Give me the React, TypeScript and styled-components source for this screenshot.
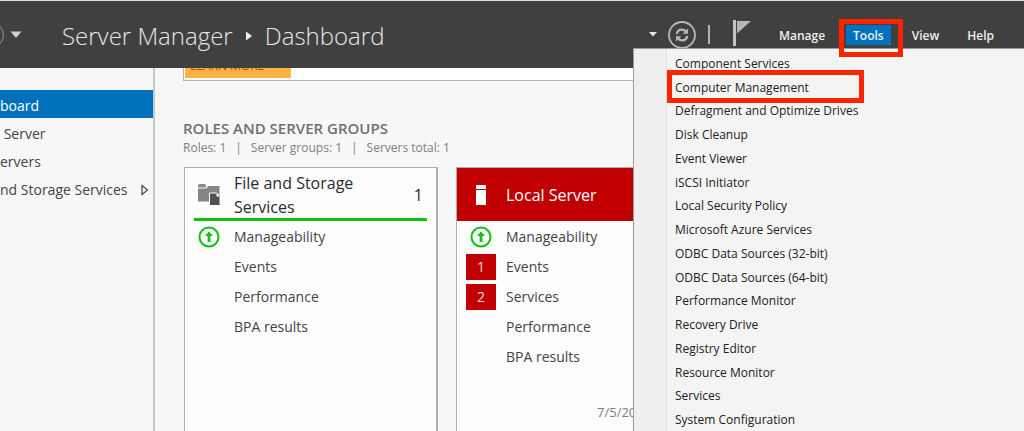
import React from 'react';
import styled, { createGlobalStyle, css } from 'styled-components';

const GlobalStyle = createGlobalStyle`
  *, *::before, *::after { box-sizing: border-box; }
  body {
    margin: 0;
    font-family: "Open Sans", "Noto Sans", sans-serif;
    font-size: 14px;
    color: #444;
    background: #f7f7f7;
  }
  button { font: inherit; color: inherit; border: 0; padding: 0; background: none; cursor: pointer; }
  a { color: inherit; text-decoration: none; }
  h1, h2, h3, p, ul { margin: 0; padding: 0; font-weight: 400; font-size: inherit; }
  ul { list-style: none; }
  svg { display: block; flex: none; }
`;

const Page = styled.div`
  position: relative;
  display: flex;
  flex-direction: column;
  height: 100vh;
  overflow: hidden;
`;

const Header = styled.header`
  display: flex;
  align-items: center;
  justify-content: space-between;
  flex: none;
  height: 68px;
  padding-right: 23px;
  color: #e6e6e6;
  background: #404040;
  border-top: 1px solid #d8dcda;
`;

const Breadcrumb = styled.div`
  display: flex;
  align-items: center;
  height: 100%;
`;

const History = styled.button`
  display: flex;
  width: 62px;
`;

const Title = styled.h1`
  display: flex;
  align-items: center;
  gap: 13px;
  padding-top: 2px;
  font-size: 24px;
  line-height: 32px;
  font-weight: 300;
  white-space: nowrap;
`;

const Actions = styled.div`
  display: flex;
  align-items: center;
`;

const IconButton = styled.button<{ $gap: number }>`
  display: flex;
  margin-right: ${p => p.$gap}px;
`;

const Divider = styled.span`
  width: 2px;
  height: 19px;
  margin-right: 23px;
  background: #b4b4b4;
`;

const MenuBar = styled.nav`
  display: flex;
  align-items: center;
  gap: 14px;
`;

const MenuButton = styled.button<{ $active?: boolean }>`
  position: relative;
  height: 20px;
  padding: 2px 7px 0;
  font-size: 12px;
  line-height: 18px;
  font-weight: 600;
  color: #f0f0f0;
  ${p => p.$active && css`background: #0072bd;`}
`;

const Highlight = styled.span<{ $inset: string }>`
  position: absolute;
  z-index: 3;
  inset: ${p => p.$inset};
  border: 5px solid #fc2500;
  pointer-events: none;
`;

const Body = styled.div`
  display: flex;
  flex: 1;
  min-height: 0;
`;

const Sidebar = styled.nav`
  flex: none;
  width: 155px;
  padding-top: 22px;
  border-right: 2px solid #c8c8c8;
`;

const SideLink = styled.a<{ $active?: boolean }>`
  display: flex;
  align-items: center;
  justify-content: space-between;
  height: 28px;
  padding: 3px 4px 0 0;
  line-height: 20px;
  white-space: pre;
  ${p => p.$active && css`color: #fff; background: #0072bd;`}
`;

const Main = styled.main`
  display: flex;
  flex-direction: column;
  flex: 1;
  min-width: 0;
  padding-left: 28px;
`;

const Welcome = styled.section`
  display: flex;
  align-items: flex-end;
  height: 13px;
  flex: none;
  padding: 0 0 2px 1px;
  overflow: hidden;
  background: #fff;
  border: solid #b4b4b4;
  border-width: 0 0 1px 1px;
`;

const LearnMore = styled.button`
  flex: none;
  width: 106px;
  height: 26px;
  padding: 4px 0 2px 5px;
  font-size: 12px;
  line-height: 20px;
  text-align: left;
  color: #93561c;
  background: #ffb143;
`;

const GroupHeading = styled.h2`
  margin-top: 37px;
  font-size: 15px;
  line-height: 20px;
  font-weight: 600;
  color: #707070;
`;

const Summary = styled.p`
  display: flex;
  gap: 9px;
  font-size: 12px;
  line-height: 20px;
  color: #808080;
`;

const Tiles = styled.div`
  display: flex;
  flex: 1;
  gap: 18px;
  margin: 9px 0 0 1px;
  min-height: 0;
`;

const Tile = styled.article`
  display: flex;
  flex-direction: column;
  flex: none;
  width: 254px;
  background: #fdfdfd;
  border: solid #b0b0b0;
  border-width: 1px 2px 0 1px;
`;

const TileHead = styled.header<{ $alert?: boolean }>`
  display: grid;
  grid-template-columns: 30px 132px 1fr;
  align-items: center;
  column-gap: 10px;
  height: 53px;
  margin: 0 9px;
  padding: 3px 4px 0 0;
  font-size: 16px;
  line-height: 24px;
  color: #2b2b2b;
  border-bottom: 3px solid #0bc30b;
  ${p => p.$alert && css`
    margin: 0;
    padding: 0 13px 0 9px;
    color: #fff;
    background: #c00000;
    border-bottom: 0;
  `}
`;

const TileName = styled.h3``;

const Total = styled.span`
  text-align: right;
`;

const IconCell = styled.span`
  display: flex;
  justify-content: center;
`;

const Rows = styled.ul`
  margin: 1px 9px 0;
`;

const Row = styled.li`
  display: grid;
  grid-template-columns: 30px 1fr;
  align-items: center;
  column-gap: 10px;
  height: 30px;
  line-height: 20px;
`;

const Count = styled.span`
  height: 26px;
  line-height: 26px;
  text-align: center;
  color: #f4dada;
  background: #c00000;
`;

const Stamp = styled.time`
  margin: 30px 0 0 140px;
  font-size: 13px;
  line-height: 20px;
  white-space: nowrap;
  color: #808080;
`;

const ToolsMenu = styled.ul`
  position: absolute;
  z-index: 2;
  top: 48px;
  right: 0;
  bottom: 0;
  display: flex;
  flex-direction: column;
  width: 391px;
  padding: 2px 0 0 33px;
  font-size: 12px;
  font-weight: 500;
  color: #222;
  background: linear-gradient(to right, #efefef 32px, #e0e0e0 32px, #e0e0e0 33px, #f4f4f4 33px);
  border: solid #9a9a9a;
  border-width: 1px 0 0 1px;
`;

const MenuItem = styled.li`
  position: relative;
  display: flex;
  flex: 1;
  min-height: 20px;
`;

const MenuLink = styled.button`
  flex: 1;
  padding: 2px 0 0 8px;
  line-height: 18px;
  text-align: left;
`;

const UpArrow = () => (
  <svg width="22" height="22" viewBox="0 0 22 22" fill="none">
    <circle cx="11" cy="11" r="9.5" stroke="#0bc30b" strokeWidth="2" />
    <path d="M11 5.5 L15 10 H12.4 V16 H9.6 V10 H7 Z" fill="#0bc30b" />
  </svg>
);

const FolderIcon = () => (
  <svg width="24" height="24" viewBox="0 0 24 24">
    <path d="M1 3 L2 1 H8 L9 2.5 V4.5 H1 Z" fill="#8a8a8a" />
    <path d="M1 5.5 H9.5 L11 3 H22.5 V18.5 H1 Z" fill="#858585" />
    <path d="M12.5 10 H19.5 L23 13.5 V22.5 H12.5 Z" fill="#505050" stroke="#fdfdfd" strokeWidth="1" />
    <path d="M19.5 10 V13.5 H23 Z" fill="#fdfdfd" />
  </svg>
);

const ServerIcon = () => (
  <svg width="10" height="20" viewBox="0 0 10 20">
    <rect width="10" height="4" fill="#fff" />
    <rect y="5" width="10" height="15" fill="#fff" />
  </svg>
);

const RefreshIcon = () => (
  <svg width="28" height="28" viewBox="0 0 28 28" fill="none" stroke="#b8b8b8">
    <circle cx="14" cy="14" r="13" strokeWidth="1.8" />
    <path d="M8.8 13 C9.3 10 11.5 8.7 14 8.7 C16 8.7 17.3 9.5 18.2 11" strokeWidth="2.2" />
    <path d="M20 7.5 V12.8 H14.7 Z" fill="#b8b8b8" stroke="none" />
    <path d="M19.2 15 C18.7 18 16.5 19.3 14 19.3 C12 19.3 10.7 18.5 9.8 17" strokeWidth="2.2" />
    <path d="M8 20.5 V15.2 H13.3 Z" fill="#b8b8b8" stroke="none" />
  </svg>
);

const tools = [
  'Component Services', 'Computer Management', 'Defragment and Optimize Drives', 'Disk Cleanup',
  'Event Viewer', 'iSCSI Initiator', 'Local Security Policy', 'Microsoft Azure Services',
  'ODBC Data Sources (32-bit)', 'ODBC Data Sources (64-bit)', 'Performance Monitor',
  'Recovery Drive', 'Registry Editor', 'Resource Monitor', 'Services', 'System Configuration',
];

type Status = { label: string; ok?: boolean; count?: number };

const StatusRows = ({ items }: { items: Status[] }) => (
  <Rows>
    {items.map(({ label, ok, count }) => (
      <Row key={label}>
        {count ? <Count>{count}</Count> : <IconCell>{ok && <UpArrow />}</IconCell>}
        <a href="#">{label}</a>
      </Row>
    ))}
  </Rows>
);

export default function App() {
  return (
    <Page>
      <GlobalStyle />
      <Header>
        <Breadcrumb>
          <History aria-label="History">
            <svg width="24" height="24" viewBox="0 0 24 24">
              <circle cx="-8" cy="12" r="11.5" fill="none" stroke="#757575" strokeWidth="1.5" />
              <path d="M10.5 8.5 H21.5 L16 15 Z" fill="#d0d0d0" />
            </svg>
          </History>
          <Title>
            Server Manager
            <svg width="6" height="10" viewBox="0 0 6 10"><path d="M0 0.5 L6 5 L0 9.5 Z" fill="#f0f0f0" /></svg>
            Dashboard
          </Title>
        </Breadcrumb>
        <Actions>
          <IconButton $gap={11} aria-label="Notifications list">
            <svg width="8" height="5" viewBox="0 0 8 5"><path d="M0 0 H8 L4 4.5 Z" fill="#e6e6e6" /></svg>
          </IconButton>
          <IconButton $gap={12} aria-label="Refresh"><RefreshIcon /></IconButton>
          <Divider />
          <IconButton $gap={21} aria-label="Notifications">
            <svg width="18" height="30" viewBox="0 0 18 30">
              <rect width="3" height="26" fill="#c4c4c4" />
              <path d="M4 1 H18 L4 13.5 Z" fill="#b8b8b8" />
            </svg>
          </IconButton>
          <MenuBar>
            <MenuButton>Manage</MenuButton>
            <MenuButton $active>Tools<Highlight $inset="-6px -12px -12px -7px" /></MenuButton>
            <MenuButton>View</MenuButton>
            <MenuButton>Help</MenuButton>
          </MenuBar>
        </Actions>
      </Header>
      <Body>
        <Sidebar>
          <SideLink href="#" $active>board</SideLink>
          <SideLink href="#">{' Server'}</SideLink>
          <SideLink href="#">ervers</SideLink>
          <SideLink href="#">
            nd Storage Services
            <svg width="8" height="12" viewBox="0 0 8 12">
              <path d="M1 1.5 L6.5 6 L1 10.5 Z" fill="none" stroke="#444" strokeWidth="1.2" />
            </svg>
          </SideLink>
        </Sidebar>
        <Main>
          <Welcome><LearnMore>LEARN MORE</LearnMore></Welcome>
          <GroupHeading>ROLES AND SERVER GROUPS</GroupHeading>
          <Summary>
            <span>Roles: 1</span><span>|</span><span>Server groups: 1</span><span>|</span><span>Servers total: 1</span>
          </Summary>
          <Tiles>
            <Tile>
              <TileHead>
                <IconCell><FolderIcon /></IconCell>
                <TileName>File and Storage Services</TileName>
                <Total>1</Total>
              </TileHead>
              <StatusRows
                items={[
                  { label: 'Manageability', ok: true }, { label: 'Events' },
                  { label: 'Performance' }, { label: 'BPA results' },
                ]}
              />
            </Tile>
            <Tile>
              <TileHead $alert>
                <IconCell><ServerIcon /></IconCell>
                <TileName>Local Server</TileName>
              </TileHead>
              <StatusRows
                items={[
                  { label: 'Manageability', ok: true }, { label: 'Events', count: 1 },
                  { label: 'Services', count: 2 }, { label: 'Performance' }, { label: 'BPA results' },
                ]}
              />
              <Stamp>7/5/20</Stamp>
            </Tile>
          </Tiles>
        </Main>
      </Body>
      <ToolsMenu>
        {tools.map(name => (
          <MenuItem key={name}>
            <MenuLink>{name}</MenuLink>
            {name === 'Computer Management' && <Highlight $inset="-5px 160px -4px 0" />}
          </MenuItem>
        ))}
      </ToolsMenu>
    </Page>
  );
}
